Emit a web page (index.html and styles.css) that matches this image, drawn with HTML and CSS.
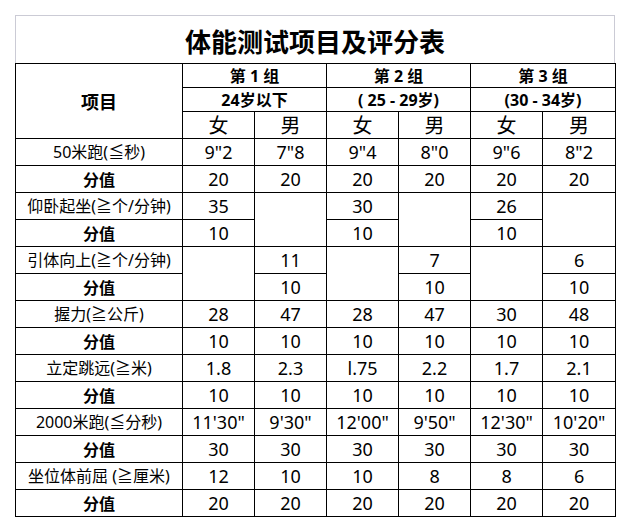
FILE: index.html
```html
<!DOCTYPE html>
<html lang="zh-CN">
<head>
<meta charset="utf-8">
<title>体能测试项目及评分表</title>
<link rel="stylesheet" href="styles.css">
</head>
<body>
<div class="sheet">
  <div class="title">体能测试项目及评分表</div>
  <table class="score">
    <colgroup>
      <col class="c-item">
      <col class="c-val"><col class="c-val"><col class="c-val"><col class="c-val"><col class="c-val"><col class="c-last">
    </colgroup>
    <tr class="h1">
      <td rowspan="3" class="head-item">项目</td>
      <td colspan="2" class="grp">第 1 组</td>
      <td colspan="2" class="grp">第 2 组</td>
      <td colspan="2" class="grp">第 3 组</td>
    </tr>
    <tr class="h2">
      <td colspan="2" class="grp">24岁以下</td>
      <td colspan="2" class="grp">( 25 - 29岁)</td>
      <td colspan="2" class="grp">(30 - 34岁)</td>
    </tr>
    <tr class="h3">
      <td class="sex">女</td><td class="sex">男</td>
      <td class="sex">女</td><td class="sex">男</td>
      <td class="sex">女</td><td class="sex">男</td>
    </tr>
    <tr>
      <td class="label">50米跑(≦秒)</td>
      <td>9"2</td><td>7"8</td><td>9"4</td><td>8"0</td><td>9"6</td><td>8"2</td>
    </tr>
    <tr>
      <td class="label score-label">分值</td>
      <td>20</td><td>20</td><td>20</td><td>20</td><td>20</td><td>20</td>
    </tr>
    <tr>
      <td class="label">仰卧起坐(≧个/分钟)</td>
      <td>35</td><td rowspan="2"></td><td>30</td><td rowspan="2"></td><td>26</td><td rowspan="2"></td>
    </tr>
    <tr>
      <td class="label score-label">分值</td>
      <td>10</td><td>10</td><td>10</td>
    </tr>
    <tr>
      <td class="label">引体向上(≧个/分钟)</td>
      <td rowspan="2"></td><td>11</td><td rowspan="2"></td><td>7</td><td rowspan="2"></td><td>6</td>
    </tr>
    <tr>
      <td class="label score-label">分值</td>
      <td>10</td><td>10</td><td>10</td>
    </tr>
    <tr>
      <td class="label">握力(≧公斤)</td>
      <td>28</td><td>47</td><td>28</td><td>47</td><td>30</td><td>48</td>
    </tr>
    <tr>
      <td class="label score-label">分值</td>
      <td>10</td><td>10</td><td>10</td><td>10</td><td>10</td><td>10</td>
    </tr>
    <tr>
      <td class="label">立定跳远(≧米)</td>
      <td>1.8</td><td>2.3</td><td>l.75</td><td>2.2</td><td>1.7</td><td>2.1</td>
    </tr>
    <tr>
      <td class="label score-label">分值</td>
      <td>10</td><td>10</td><td>10</td><td>10</td><td>10</td><td>10</td>
    </tr>
    <tr>
      <td class="label">2000米跑(≦分秒)</td>
      <td>11'30"</td><td>9'30"</td><td>12'00"</td><td>9'50"</td><td>12'30"</td><td>10'20"</td>
    </tr>
    <tr>
      <td class="label score-label">分值</td>
      <td>30</td><td>30</td><td>30</td><td>30</td><td>30</td><td>30</td>
    </tr>
    <tr>
      <td class="label">坐位体前屈 (≧厘米)</td>
      <td>12</td><td>10</td><td>10</td><td>8</td><td>8</td><td>6</td>
    </tr>
    <tr>
      <td class="label score-label">分值</td>
      <td>20</td><td>20</td><td>20</td><td>20</td><td>20</td><td>20</td>
    </tr>
  </table>
</div>
</body>
</html>
```
FILE: styles.css
```css
html, body {
  margin: 0;
  padding: 0;
  background: #ffffff;
}

body {
  font-family: "Noto Sans", "Noto Sans CJK SC", sans-serif;
  color: #000000;
}

.sheet {
  padding: 15px 0 0 15px;
  width: 600px;
}

.title {
  box-sizing: border-box;
  width: 600px;
  height: 48px;
  border: 1px solid #cbcbd5;
  border-bottom: none;
  display: flex;
  align-items: center;
  justify-content: center;
  font-family: "Noto Sans CJK SC", sans-serif;
  font-weight: 700;
  font-size: 26px;
  padding-top: 1px;
}

.score {
  border-collapse: collapse;
  table-layout: fixed;
  width: 600px;
}

.c-item { width: 167px; }
.c-val { width: 72px; }
.c-last { width: 73px; }

.score td {
  border: 1px solid #000000;
  padding: 0;
  text-align: center;
  vertical-align: middle;
  height: 26px;
  font-size: 18px;
  line-height: 20px;
  white-space: nowrap;
  overflow: hidden;
}

.score tr.h1 td,
.score tr.h2 td {
  height: 23px;
}

.score td.head-item {
  font-family: "Noto Sans CJK SC", sans-serif;
  font-weight: 700;
  font-size: 18px;
}

.score td.grp {
  font-weight: 700;
  font-size: 16px;
}

.score td.sex {
  font-family: "Noto Sans CJK SC", sans-serif;
  font-size: 20px;
  font-weight: 400;
}

.score td.label {
  font-size: 16px;
  font-weight: 400;
}

.score td.score-label {
  font-family: "Noto Sans CJK SC", sans-serif;
  font-weight: 700;
  font-size: 16px;
}
```
